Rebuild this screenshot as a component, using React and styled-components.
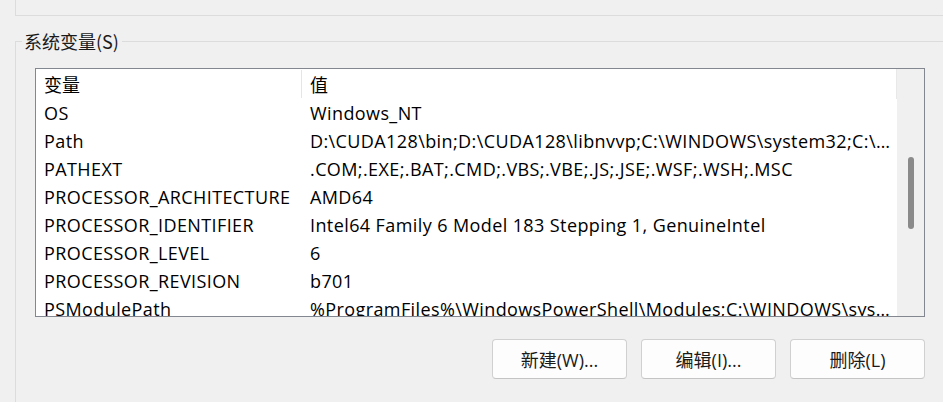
import React from "react";
import styled, { createGlobalStyle } from "styled-components";

const GlobalStyle = createGlobalStyle`
  html, body {
    margin: 0;
    padding: 0;
    background: #f0f0f0;
    overflow: hidden;
  }
  body {
    font-family: "Open Sans", "Noto Sans CJK SC", sans-serif;
    font-size: 18px;
    color: #000;
  }
`;

const rows = [
  ["OS", "Windows_NT"],
  ["Path", "D:\\CUDA128\\bin;D:\\CUDA128\\libnvvp;C:\\WINDOWS\\system32;C:\\..."],
  ["PATHEXT", ".COM;.EXE;.BAT;.CMD;.VBS;.VBE;.JS;.JSE;.WSF;.WSH;.MSC"],
  ["PROCESSOR_ARCHITECTURE", "AMD64"],
  ["PROCESSOR_IDENTIFIER", "Intel64 Family 6 Model 183 Stepping 1, GenuineIntel"],
  ["PROCESSOR_LEVEL", "6"],
  ["PROCESSOR_REVISION", "b701"],
  ["PSModulePath", "%ProgramFiles%\\WindowsPowerShell\\Modules;C:\\WINDOWS\\system32\\WindowsPowerShell\\v1.0\\Modules"],
];

function App() {
  return (
    <Page>
      <GlobalStyle />
      <UserGroup />
      <Group>
        <Legend>系统变量(S)</Legend>
        <ListBox>
          <ListArea>
            <Header>
              <HeadCell $width="266px" $divider>变量</HeadCell>
              <HeadCell>值</HeadCell>
            </Header>
            {rows.map(([name, value]) => (
              <Row key={name}>
                <Cell $width="266px">{name}</Cell>
                <Cell>{value}</Cell>
              </Row>
            ))}
          </ListArea>
          <ScrollTrack>
            <Thumb />
          </ScrollTrack>
        </ListBox>
        <Buttons>
          <Button>新建(W)...</Button>
          <Button>编辑(I)...</Button>
          <Button>删除(L)</Button>
        </Buttons>
      </Group>
    </Page>
  );
}

const Page = styled.div`
  width: 943px;
  height: 402px;
  padding-left: 15px;
  box-sizing: border-box;
  overflow: hidden;
`;

const UserGroup = styled.div`
  height: 15px;
  border-left: 1px solid #dcdcdc;
  border-bottom: 1px solid #dcdcdc;
`;

const Group = styled.fieldset`
  margin: 16px 0 0 0;
  padding: 18px 18px 0 19px;
  border: none;
  border-top: 1px solid #dcdcdc;
  border-left: 1px solid #dcdcdc;
  min-width: 0;
  height: 400px;
`;

const Legend = styled.legend`
  margin-left: -13px;
  padding: 0 3px 0 2px;
  line-height: 18px;
  font-size: 18px;
  font-family: "Noto Sans CJK SC", "Open Sans", sans-serif;
  color: #1a1a1a;
`;

const ListBox = styled.div`
  display: flex;
  height: 247px;
  border: 1px solid #828790;
  background: #fff;
  overflow: hidden;
`;

const ListArea = styled.div`
  flex: 1;
  min-width: 0;
  display: flex;
  flex-direction: column;
`;

const Header = styled.div`
  display: flex;
  height: 30px;
  flex-shrink: 0;
  border-right: 1px solid #e8e8e8;
`;

const HeadCell = styled.div`
  display: flex;
  align-items: center;
  padding-left: 8px;
  box-sizing: border-box;
  width: ${(p) => p.$width || "auto"};
  flex: ${(p) => (p.$width ? "none" : 1)};
  margin: 1px 0 1px;
  border-right: ${(p) => (p.$divider ? "1px solid #e5e5e5" : "none")};
  font-family: "Noto Sans CJK SC", sans-serif;
  font-size: 18px;
`;

const Row = styled.div`
  display: flex;
  height: 28px;
  flex-shrink: 0;
  align-items: center;
`;

const Cell = styled.div`
  width: ${(p) => p.$width || "auto"};
  flex: ${(p) => (p.$width ? "none" : 1)};
  min-width: 0;
  box-sizing: border-box;
  padding-left: 8px;
  padding-right: ${(p) => (p.$width ? "0" : "6px")};
  white-space: nowrap;
  overflow: hidden;
  text-overflow: ellipsis;
  line-height: 28px;
  letter-spacing: 0.4px;
`;

const ScrollTrack = styled.div`
  width: 27px;
  flex-shrink: 0;
  background: #f0f0f0;
  display: flex;
  justify-content: center;
  padding-top: 88px;
  box-sizing: border-box;
`;

const Thumb = styled.div`
  width: 6px;
  height: 72px;
  border-radius: 3px;
  background: #8a8a8a;
`;

const Buttons = styled.div`
  display: flex;
  justify-content: flex-end;
  gap: 14px;
  margin-top: 22px;
`;

const Button = styled.button`
  width: 135px;
  height: 40px;
  border: 1px solid #d0d0d0;
  border-bottom-color: #c4c4c4;
  border-radius: 4px;
  background: #fdfdfd;
  font-family: "Open Sans", "Noto Sans CJK SC", sans-serif;
  font-size: 18px;
  color: #1a1a1a;
  padding: 0;
`;

export default App;
